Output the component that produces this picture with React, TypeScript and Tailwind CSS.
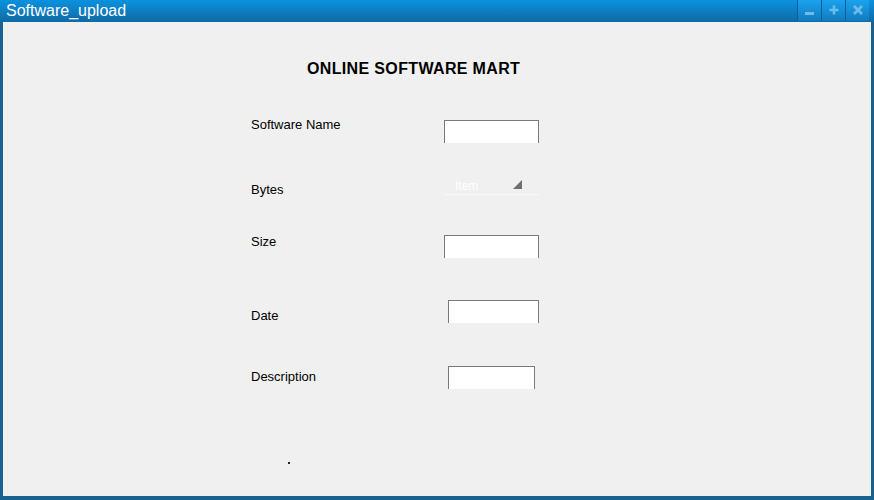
import React from 'react';

const font = { fontFamily: '"Liberation Sans", Arial, sans-serif' };

const TitleButton = ({ children }: { children: React.ReactNode }) => (
  <div className="w-[24px] h-[21px] flex items-center justify-center bg-gradient-to-b from-[#1ba3ee] to-[#117ac0] border-l border-[#0b5e96]">
    {children}
  </div>
);

const Field = ({ width }: { width: string }) => (
  <div className={`${width} h-[23px] bg-white border-t border-x border-[#7a7a7a]`} />
);

const App = () => {
  return (
    <div className="w-[874px] h-[500px] bg-[#17628e] flex flex-col" style={font}>
      {/* title bar */}
      <div className="h-[22px] flex items-start bg-gradient-to-b from-[#0a92df] to-[#0e6aa5]">
        <span className="ml-[6px] mt-[1px] text-[16px] leading-[19px] text-white">Software_upload</span>
        <div className="ml-auto mr-[5px] flex">
          <TitleButton>
            <div className="w-[9px] h-[3px] mt-[6px] bg-[#6cbdec]" />
          </TitleButton>
          <TitleButton>
            <svg width="10" height="10" viewBox="0 0 10 10" className="-mt-[1px]">
              <path d="M5 0.5v9M0.5 5h9" stroke="#6cbdec" strokeWidth="2.6" />
            </svg>
          </TitleButton>
          <TitleButton>
            <svg width="10" height="10" viewBox="0 0 10 10" className="-mt-[1px]">
              <path d="M1 1l8 8M9 1l-8 8" stroke="#6cbdec" strokeWidth="2.6" />
            </svg>
          </TitleButton>
        </div>
      </div>

      {/* content */}
      <div className="flex-1 mx-[3px] mb-[4px] bg-[#f0f0f0] flex flex-col pt-[37px] text-black">
        <div className="ml-[304px] text-[16px] leading-[19px] font-bold tracking-[0.35px]">ONLINE SOFTWARE MART</div>

        <div className="ml-[248px] flex flex-col text-[13px] leading-[15px]">
          {/* Software Name */}
          <div className="mt-[39px] flex items-start">
            <span className="w-[193px]">Software Name</span>
            <div className="mt-[3px]">
              <Field width="w-[95px]" />
            </div>
          </div>

          {/* Bytes */}
          <div className="mt-[33px] flex items-start">
            <span className="w-[193px] mt-[6px]">Bytes</span>
            <div className="w-[95px] h-[19px] border-b border-[#f8f8f8] flex items-start">
              <span className="ml-[11px] mt-[3px] text-[12px] leading-[14px] text-white">Item</span>
              <svg width="9" height="9" viewBox="0 0 9 9" className="ml-[35px] mt-[4px]">
                <path d="M9 0V9H0Z" fill="#6f6f6f" />
              </svg>
            </div>
          </div>

          {/* Size */}
          <div className="mt-[37px] flex items-start">
            <span className="w-[193px]">Size</span>
            <div className="mt-[1px]">
              <Field width="w-[95px]" />
            </div>
          </div>

          {/* Date */}
          <div className="mt-[42px] flex items-start">
            <span className="w-[197px] mt-[8px]">Date</span>
            <Field width="w-[91px]" />
          </div>

          {/* Description */}
          <div className="mt-[43px] flex items-start">
            <span className="w-[197px] mt-[3px]">Description</span>
            <Field width="w-[87px]" />
          </div>
        </div>

        <div className="ml-[285px] mt-[73px] w-[2px] h-[2px] bg-[#222]" />
      </div>
    </div>
  );
};

export default App;
